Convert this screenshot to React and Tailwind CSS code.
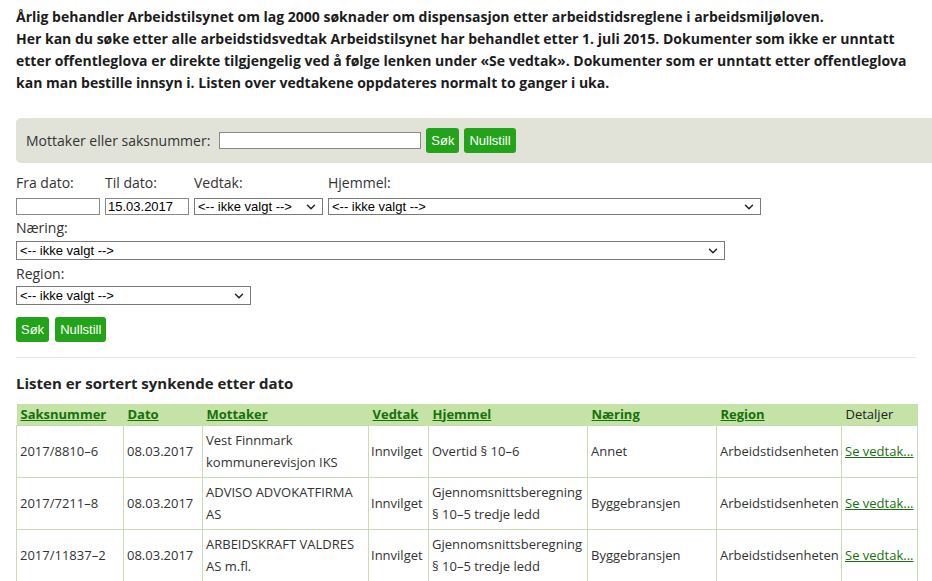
import { ChevronDown } from "lucide-react";

const rader = [
  {
    sak: "2017/8810–6",
    dato: "08.03.2017",
    mottaker: ["Vest Finnmark", "kommunerevisjon IKS"],
    vedtak: "Innvilget",
    hjemmel: ["Overtid § 10–6"],
    naering: "Annet",
    region: "Arbeidstidsenheten",
  },
  {
    sak: "2017/7211–8",
    dato: "08.03.2017",
    mottaker: ["ADVISO ADVOKATFIRMA", "AS"],
    vedtak: "Innvilget",
    hjemmel: ["Gjennomsnittsberegning", "§ 10–5 tredje ledd"],
    naering: "Byggebransjen",
    region: "Arbeidstidsenheten",
  },
  {
    sak: "2017/11837–2",
    dato: "08.03.2017",
    mottaker: ["ARBEIDSKRAFT VALDRES", "AS m.fl."],
    vedtak: "Innvilget",
    hjemmel: ["Gjennomsnittsberegning", "§ 10–5 tredje ledd"],
    naering: "Byggebransjen",
    region: "Arbeidstidsenheten",
  },
  {
    sak: "2017/9904–4",
    dato: "07.03.2017",
    mottaker: ["Helse Nord RHF", ""],
    vedtak: "Innvilget",
    hjemmel: ["Overtid § 10–6"],
    naering: "Helse",
    region: "Arbeidstidsenheten",
  },
];

function Velger({ className }) {
  return (
    <div
      className={
        "flex items-center justify-between border border-[#7a7a7a] bg-white pl-[3px] pr-[4px] text-[13px] text-black font-['Liberation_Sans',Arial,sans-serif] " +
        className
      }
    >
      <span>{"<-- ikke valgt -->"}</span>
      <ChevronDown size={14} strokeWidth={2.5} className="text-[#222]" />
    </div>
  );
}

function Knapp({ children }) {
  return (
    <button
      type="button"
      className="h-[25px] rounded-[3px] bg-[#22a319] px-[5px] text-[13px] text-white font-['Liberation_Sans',Arial,sans-serif]"
    >
      {children}
    </button>
  );
}

function Kol({ children }) {
  return (
    <th className="px-[4px] py-0 text-left font-bold text-[#17700c] underline">
      {children}
    </th>
  );
}

export default function App() {
  return (
    <div className="w-[932px] h-[581px] overflow-hidden bg-white pl-[16px] font-['Open_Sans',sans-serif] text-[#333]">
      <div className="pt-[6px] text-[14px] font-bold leading-[22px] text-[#1c1c1c]">
        <p>
          Årlig behandler Arbeidstilsynet om lag 2000 søknader om dispensasjon
          etter arbeidstidsreglene i arbeidsmiljøloven.
        </p>
        <p className="pr-[20px]">
          Her kan du søke etter alle arbeidstidsvedtak Arbeidstilsynet har
          behandlet etter 1. juli 2015. Dokumenter som ikke er unntatt etter
          offentleglova er direkte tilgjengelig ved å følge lenken under «Se
          vedtak». Dokumenter som er unntatt etter offentleglova kan man
          bestille innsyn i. Listen over vedtakene oppdateres normalt to ganger
          i uka.
        </p>
      </div>

      <div className="mt-[24px] flex h-[45px] items-center gap-[5px] rounded-l-[5px] bg-[#e1e3d9] pl-[10px] text-[14px]">
        <span className="mr-[4px]">Mottaker eller saksnummer:</span>
        <div className="h-[17px] w-[202px] border border-[#8a8a8a] bg-white"></div>
        <Knapp>Søk</Knapp>
        <Knapp>Nullstill</Knapp>
      </div>

      <div className="mt-[10px] flex gap-[5px] text-[14px] leading-[20px]">
        <div className="flex flex-col gap-[5px]">
          <span>Fra dato:</span>
          <div className="h-[17px] w-[84px] border border-[#8a8a8a] bg-white"></div>
        </div>
        <div className="flex flex-col gap-[5px]">
          <span>Til dato:</span>
          <div className="flex h-[17px] w-[84px] items-center border border-[#8a8a8a] bg-white pl-[2px] text-[13px] text-black font-['Liberation_Sans',Arial,sans-serif]">
            15.03.2017
          </div>
        </div>
        <div className="flex flex-col gap-[5px]">
          <span>Vedtak:</span>
          <Velger className="h-[17px] w-[129px]" />
        </div>
        <div className="flex flex-col gap-[5px]">
          <span>Hjemmel:</span>
          <Velger className="h-[17px] w-[433px]" />
        </div>
      </div>

      <div className="mt-[3px] flex flex-col gap-[3px] text-[14px] leading-[20px]">
        <span>Næring:</span>
        <Velger className="h-[19px] w-[709px]" />
      </div>
      <div className="mt-[4px] flex flex-col gap-[2px] text-[14px] leading-[20px]">
        <span>Region:</span>
        <Velger className="h-[19px] w-[235px]" />
      </div>

      <div className="mt-[12px] flex gap-[6px]">
        <Knapp>Søk</Knapp>
        <Knapp>Nullstill</Knapp>
      </div>

      <div className="mt-[15px] mr-[16px] border-t border-[#e4e4e4]"></div>

      <h2 className="mt-[14px] text-[15px] font-bold text-[#222]">
        Listen er sortert synkende etter dato
      </h2>

      <table className="mt-[9px] w-[901px] table-fixed border-collapse text-[13px]">
        <colgroup>
          <col className="w-[107px]" />
          <col className="w-[79px]" />
          <col className="w-[166px]" />
          <col className="w-[60px]" />
          <col className="w-[159px]" />
          <col className="w-[129px]" />
          <col className="w-[125px]" />
          <col className="w-[76px]" />
        </colgroup>
        <thead>
          <tr className="h-[21px] bg-[#c5e3a6] leading-[21px]">
            <Kol>Saksnummer</Kol>
            <Kol>Dato</Kol>
            <Kol>Mottaker</Kol>
            <Kol>Vedtak</Kol>
            <Kol>Hjemmel</Kol>
            <Kol>Næring</Kol>
            <Kol>Region</Kol>
            <th className="px-[4px] py-0 text-left font-normal text-[#222]">
              Detaljer
            </th>
          </tr>
        </thead>
        <tbody>
          {rader.map((r) => (
            <tr key={r.sak} className="h-[52px] leading-[22px]">
              <td className="border border-[#c9dcb3] px-[3px]">{r.sak}</td>
              <td className="border border-[#c9dcb3] px-[3px]">{r.dato}</td>
              <td className="border border-[#c9dcb3] px-[3px]">
                {r.mottaker[0]}
                <br />
                {r.mottaker[1]}
              </td>
              <td className="border border-[#c9dcb3] px-[2px]">{r.vedtak}</td>
              <td className="border border-[#c9dcb3] px-[3px]">
                {r.hjemmel.map((h, i) => (
                  <div key={i}>{h}</div>
                ))}
              </td>
              <td className="border border-[#c9dcb3] px-[3px]">{r.naering}</td>
              <td className="border border-[#c9dcb3] px-[3px]">{r.region}</td>
              <td className="border border-[#c9dcb3] px-[3px]">
                <a href="#" className="text-[#17700c] underline">
                  Se vedtak...
                </a>
              </td>
            </tr>
          ))}
        </tbody>
      </table>
    </div>
  );
}
